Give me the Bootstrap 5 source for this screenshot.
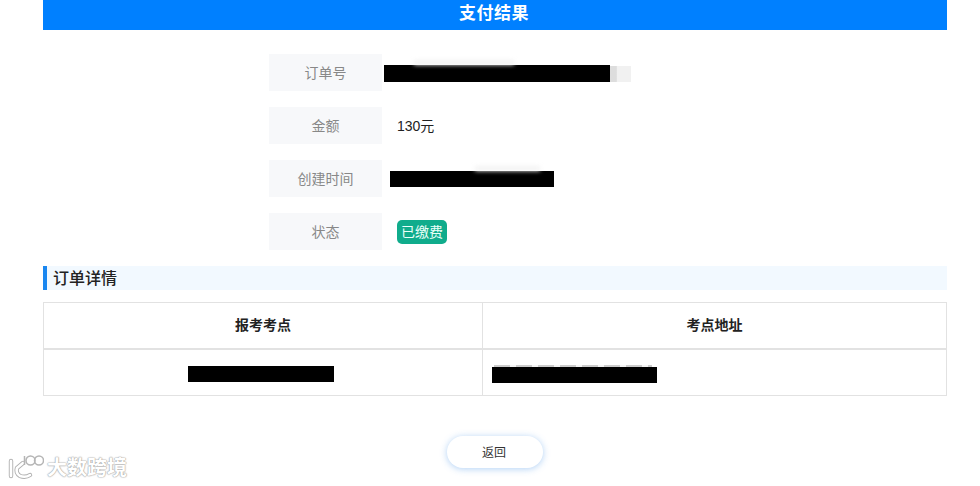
<!DOCTYPE html>
<html lang="zh-CN">
<head>
    <meta charset="UTF-8">
    <meta name="viewport" content="width=device-width, initial-scale=1.0">
    <title>支付结果</title>
    <link href="https://cdn.jsdelivr.net/npm/bootstrap@5.3.0/dist/css/bootstrap.min.css" rel="stylesheet">
    <style>
        body {
            background: #fff;
            color: #222;
            font-family: "Liberation Sans", "Noto Sans CJK SC", sans-serif;
            font-size: 14px;
            height: 486px;
            overflow: hidden;
        }

        .page-wrap {
            margin: 0 33px 0 43px;
        }

        .pay-head {
            background: #0080ff;
            color: #fff;
            font-size: 17px;
            font-weight: 700;
            height: 30px;
            line-height: 28px;
            text-align: center;
            letter-spacing: .5px;
            padding-right: 2px;
        }

        .info-list {
            margin: 24px 0 0 226px;
            gap: 16px;
        }

        .info-label {
            width: 113px;
            height: 37px;
            line-height: 39px;
            background: #f7f8fa;
            color: #888;
            text-align: center;
        }

        .info-value {
            padding-left: 15px;
            padding-top: 1px;
        }

        /* redacted values */
        .hide-bar {
            display: block;
            background: #000;
            height: 17px;
            position: relative;
        }

        .hide-one { width: 226px; margin-left: -13px; }
        .hide-two { width: 164px; margin-left: -7px; height: 16px; }
        .hide-cell { width: 146px; height: 16px; margin: 4px 0 0 134px; }
        .hide-addr { width: 165px; height: 16px; margin: 6px 0 0 -1px; }

        .hide-one::after {
            content: "";
            position: absolute;
            left: 226px;
            top: 1px;
            width: 21px;
            height: 16px;
            background: linear-gradient(90deg, #ddd 30%, #f1f1f1 35%);
        }

        /* faint smudge left around the redaction */
        .hide-one::before,
        .hide-two::before {
            content: "";
            position: absolute;
            height: 5px;
            background: #f3f3f3;
            filter: blur(2px);
        }

        .hide-one::before { left: 30px; top: -5px; width: 100px; }
        .hide-two::before { left: 85px; top: -5px; width: 65px; }

        .hide-addr::before {
            content: "";
            position: absolute;
            left: 2px;
            right: 5px;
            top: -2px;
            height: 2px;
            background: repeating-linear-gradient(90deg, #ccc 0 16px, #f4f4f4 16px 22px);
            filter: blur(.6px);
        }

        .paid-tag {
            background: #10ac8c;
            color: #eafff9;
            height: 24px;
            line-height: 24px;
            width: 50px;
            margin-top: -1px;
            text-align: center;
            border-radius: 5px;
        }

        .detail-title {
            background: #f2f9ff;
            border-left: 4px solid #1a87f0;
            height: 24px;
            line-height: 25px;
            margin-top: 16px;
            padding-left: 6px;
            font-size: 16px;
            font-weight: 500;
            color: #222;
        }

        .detail-table {
            margin: 12px 0 0;
            table-layout: fixed;
            --bs-border-color: #e2e2e2;
            text-align: center;
        }

        .detail-table th,
        .detail-table td {
            padding: 0 10px;
            vertical-align: middle;
            font-size: 14px;
            color: #222;
            border-color: #e2e2e2;
        }

        .detail-table th {
            height: 46px;
            padding-top: 1px;
            font-weight: 700;
        }

        .detail-table td {
            height: 47px;
            text-align: left;
        }

        .detail-table th:first-child,
        .detail-table td:first-child {
            width: 439px;
        }

        .detail-table thead th {
            border-bottom: 2px solid #e2e2e2;
        }

        .back-row {
            margin-top: 40px;
        }

        .back-btn {
            width: 96px;
            height: 32px;
            padding: 2px 2px 0 0;
            border: 0;
            border-radius: 16px;
            background: #fff;
            color: #333;
            font-size: 12px;
            box-shadow: 0 1px 7px rgba(60, 140, 230, .4);
        }

        .mark-logo {
            position: absolute;
            left: 8px;
            top: 455px;
            gap: 3px;
            color: #fff;
            font-size: 20px;
            font-weight: 700;
            line-height: 26px;
            text-shadow: 0 0 1px #a5a5a5, 0 0 1px #a5a5a5, 0 0 2px #b5b5b5;
        }
    </style>
</head>
<body>
    <div class="page-wrap">
        <div class="pay-head">支付结果</div>

        <div class="info-list d-flex flex-column">
            <div class="d-flex align-items-center">
                <div class="info-label">订单号</div>
                <div class="info-value"><span class="hide-bar hide-one"></span></div>
            </div>
            <div class="d-flex align-items-center">
                <div class="info-label">金额</div>
                <div class="info-value">130元</div>
            </div>
            <div class="d-flex align-items-center">
                <div class="info-label">创建时间</div>
                <div class="info-value"><span class="hide-bar hide-two"></span></div>
            </div>
            <div class="d-flex align-items-center">
                <div class="info-label">状态</div>
                <div class="info-value"><div class="paid-tag">已缴费</div></div>
            </div>
        </div>

        <div class="detail-title">订单详情</div>

        <table class="table table-bordered detail-table">
            <thead>
                <tr>
                    <th>报考考点</th>
                    <th>考点地址</th>
                </tr>
            </thead>
            <tbody>
                <tr>
                    <td><span class="hide-bar hide-cell"></span></td>
                    <td><span class="hide-bar hide-addr"></span></td>
                </tr>
            </tbody>
        </table>

        <div class="back-row d-flex justify-content-center">
            <button type="button" class="btn back-btn">返回</button>
        </div>
    </div>

    <!-- watermark -->
    <div class="mark-logo d-flex align-items-center">
        <svg width="36" height="26" viewBox="0 0 36 26" fill="none">
            <g stroke="#b0b0b0" stroke-width="4.4" stroke-linecap="round">
                <path d="M3 6v15"/>
                <path d="M15 8 9 13c-1 3 0 6 3 8 3 1 7 1 10-1"/>
            </g>
            <g stroke="#fff" stroke-width="2.6" stroke-linecap="round">
                <path d="M3 6v15"/>
                <path d="M15 8 9 13c-1 3 0 6 3 8 3 1 7 1 10-1"/>
            </g>
            <g stroke="#b5b5b5" stroke-width="1.5">
                <path d="M16.5 1v9"/>
                <circle cx="22.5" cy="5.5" r="4.5"/>
                <circle cx="31" cy="5.5" r="4.5"/>
            </g>
        </svg>
        <span>大数跨境</span>
    </div>

    <script src="https://cdn.jsdelivr.net/npm/bootstrap@5.3.0/dist/js/bootstrap.bundle.min.js"></script>
</body>
</html>
